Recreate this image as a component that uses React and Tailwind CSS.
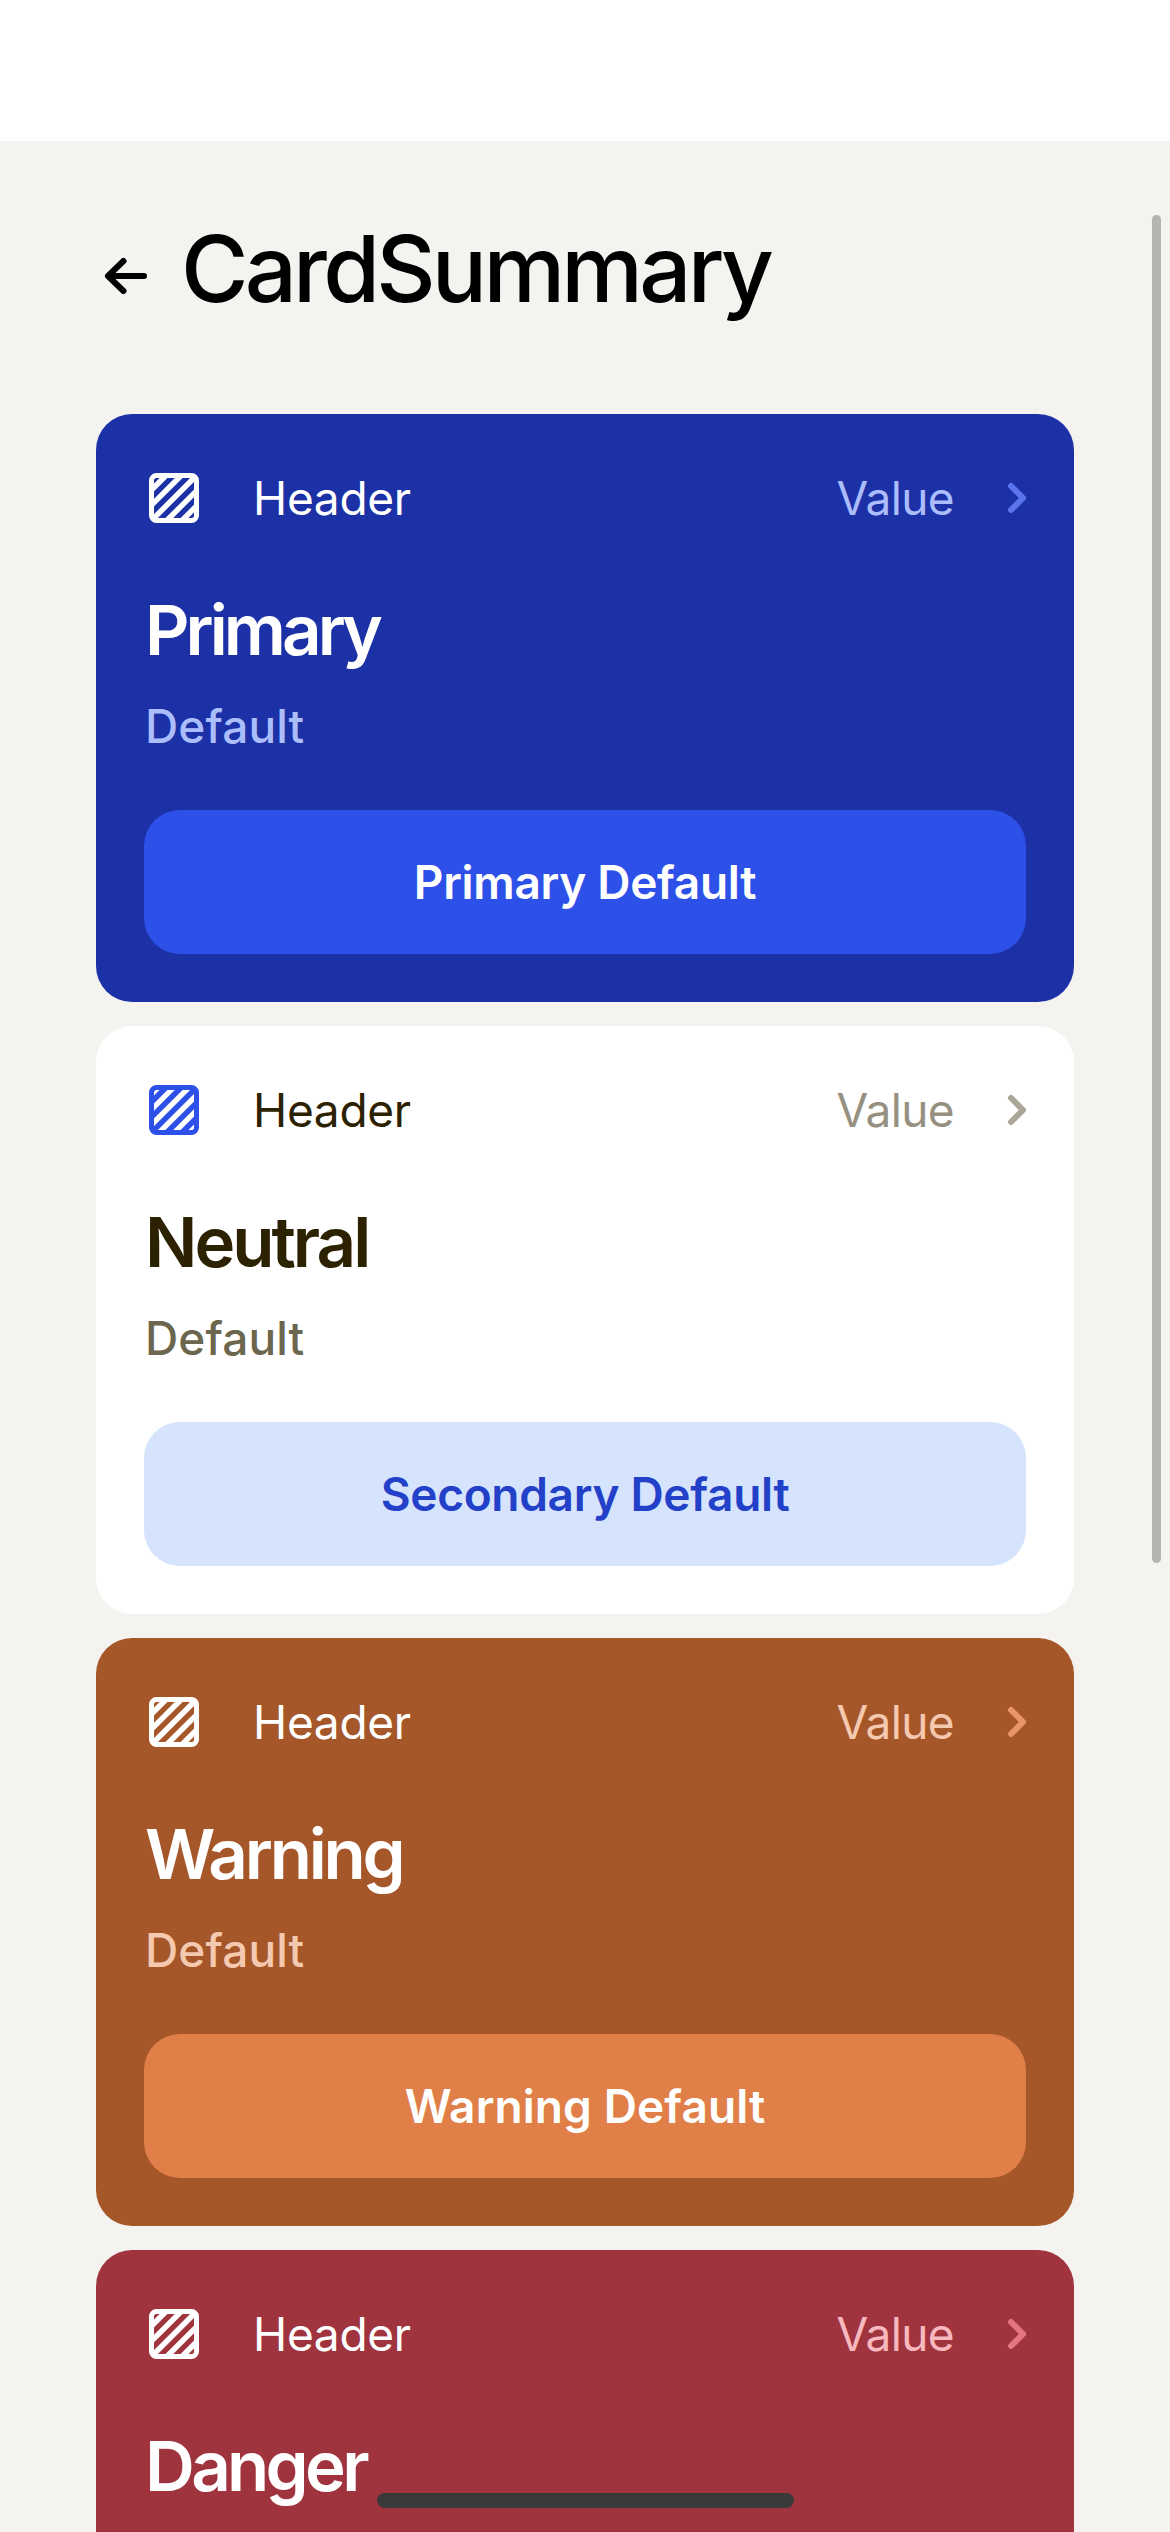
import React from "react";

const cards = [
  {
    title: "Primary",
    titleTracking: "tracking-[-3.95px]",
    sub: "Default",
    action: "Primary Default",
    actionTracking: "tracking-[-0.3px]",
    card: "bg-[#1c31a5]",
    icon: "text-white",
    heading: "text-white",
    value: "text-[#abbdfb]",
    chevron: "text-[#5a75ee]",
    subColor: "text-[#abbdfb]",
    button: "bg-[#2d51e8] text-white",
  },
  {
    title: "Neutral",
    titleTracking: "tracking-[-3px]",
    sub: "Default",
    action: "Secondary Default",
    actionTracking: "tracking-[-0.3px]",
    card: "bg-white",
    icon: "text-[#2d51e8]",
    heading: "text-[#2c2100]",
    value: "text-[#959080]",
    chevron: "text-[#aba698]",
    subColor: "text-[#6b664d]",
    button: "bg-[#d5e3fd] text-[#2340c8]",
  },
  {
    title: "Warning",
    titleTracking: "tracking-[-3.2px]",
    sub: "Default",
    action: "Warning Default",
    actionTracking: "tracking-[0.1px]",
    card: "bg-[#a5572a]",
    icon: "text-white",
    heading: "text-white",
    value: "text-[#f5c9b0]",
    chevron: "text-[#e8956a]",
    subColor: "text-[#f5c9b0]",
    button: "bg-[#e07f48] text-white",
  },
  {
    title: "Danger",
    titleTracking: "tracking-[-3.7px]",
    card: "bg-[#a0343e]",
    icon: "text-white",
    heading: "text-white",
    value: "text-[#f8b9be]",
    chevron: "text-[#e57582]",
  },
];

function HatchIcon({ className }) {
  return (
    <svg viewBox="0 0 60 60" className={`size-[60px] ${className}`} fill="none" stroke="currentColor" strokeWidth="5">
      <rect x="7.5" y="7.5" width="45" height="45" rx="5" />
      <path strokeWidth="5.4" d="M8 21.5 21.5 8M8 36.7 36.7 8M8 52 52 8M23.3 52 52 23.3M38.5 52 52 38.5" />
    </svg>
  );
}

function Chevron({ className }) {
  return (
    <svg viewBox="0 0 24 36" className={`h-9 w-6 ${className}`} fill="none" stroke="currentColor" strokeWidth="6" strokeLinecap="round" strokeLinejoin="round">
      <path d="M9 6 21 18 9 30" />
    </svg>
  );
}

function BackArrow() {
  return (
    <svg viewBox="0 0 48 48" className="size-12" fill="none" stroke="currentColor" strokeWidth="6" strokeLinecap="round" strokeLinejoin="round">
      <path d="M42 24H6M21.5 9 6 24 21.5 39" />
    </svg>
  );
}

function CardSummary({ item }) {
  return (
    <section className={`flex h-[588px] shrink-0 flex-col rounded-[36px] p-12 ${item.card}`}>
      <div className="flex h-[72px] items-center text-[46px] leading-[72px]">
        <HatchIcon className={item.icon} />
        <span className={`ml-[49px] tracking-[-0.3px] ${item.heading}`}>Header</span>
        <span className={`mr-[48px] ml-auto tracking-[-0.6px] ${item.value}`}>Value</span>
        <Chevron className={item.chevron} />
      </div>
      <h2 className={`mt-[54px] ml-px text-[69px] leading-[84px] font-semibold ${item.titleTracking} ${item.heading}`}>{item.title}</h2>
      {item.sub && (
        <p className={`mt-[18px] ml-px text-[46px] leading-[72px] font-medium tracking-[0.1px] ${item.subColor}`}>{item.sub}</p>
      )}
      {item.action && (
        <button className={`mt-12 h-36 rounded-[36px] text-[46px] leading-[72px] font-semibold ${item.actionTracking} ${item.button}`}>
          {item.action}
        </button>
      )}
    </section>
  );
}

export default function App() {
  return (
    <div className="relative flex h-[2532px] w-[1170px] flex-col overflow-hidden bg-white font-['Inter',sans-serif]">
      <div className="h-[141px] shrink-0" />
      <main className="flex min-h-0 flex-1 flex-col overflow-hidden bg-[#f4f3ef] px-24">
        <header className="flex h-[273px] shrink-0 items-start pt-[68px] pl-1.5 text-black">
          <div className="mt-[43px]">
            <BackArrow />
          </div>
          <h1 className="ml-[31px] text-[92px] leading-[120px] font-medium tracking-[-3.8px]">CardSummary</h1>
        </header>
        <div className="flex flex-col gap-6">
          {cards.map((item) => (
            <CardSummary key={item.title} item={item} />
          ))}
        </div>
      </main>
      <div className="absolute top-[215px] right-[9px] h-[1348px] w-[9px] rounded-full bg-[#b5b4b0]" />
      <div className="absolute bottom-6 left-[377px] h-[15px] w-[417px] rounded-full bg-[#3a3a3a]" />
    </div>
  );
}
